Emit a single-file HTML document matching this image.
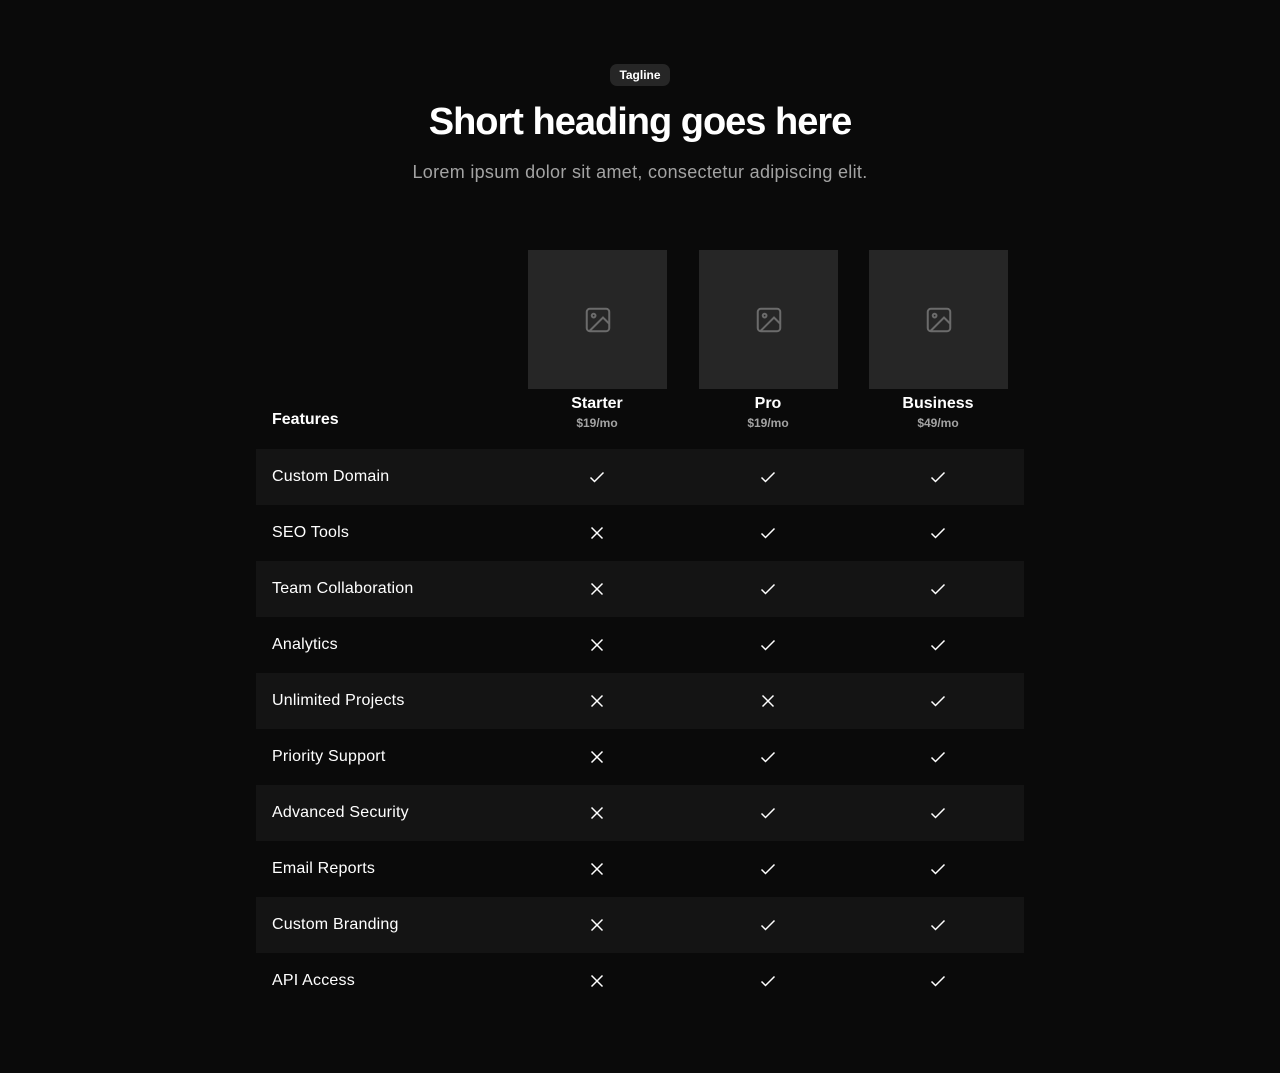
<!DOCTYPE html>
<html><head><style>
body{margin:0;background:#0a0a0a;font-family:"Liberation Sans",sans-serif;color:#fff;}
.wrap{width:1280px;height:1073px;position:relative;overflow:hidden;}
.tag{position:absolute;left:610px;top:64px;width:60px;height:22px;border-radius:7px;background:#262626;font-size:12px;font-weight:bold;text-align:center;line-height:22px;}
h1{position:absolute;top:99px;left:0;width:1280px;text-align:center;margin:0;font-size:38px;letter-spacing:-1px;font-weight:bold;line-height:46px;}
.sub{position:absolute;top:160px;width:1280px;text-align:center;font-size:18px;letter-spacing:.3px;color:#a3a3a3;line-height:24px;}
.img{position:absolute;top:250px;width:139px;height:139px;background:#262626;display:flex;align-items:center;justify-content:center;}
.ph{position:absolute;top:395px;width:170px;text-align:center;}
.pn{font-weight:bold;font-size:16px;line-height:18px;}
.pp{font-size:12px;color:#a3a3a3;font-weight:bold;line-height:16px;margin-top:2px;}
.feat{position:absolute;left:272px;top:411px;font-weight:bold;font-size:16px;line-height:18px;}
.row{position:absolute;left:256px;width:768px;height:56px;font-size:16px;}
.row.s{background:#141414;}
.row .t{position:absolute;left:16px;top:0;line-height:56px;letter-spacing:.2px;}
.row .c{position:absolute;top:19px;width:18px;height:18px;}
</style></head><body><div class="wrap">
<div class="tag">Tagline</div>
<h1>Short heading goes here</h1>
<div class="sub">Lorem ipsum dolor sit amet, consectetur adipiscing elit.</div>
<div class="feat">Features</div>
<div class="img" style="left:528px"><svg width="30" height="30" viewBox="0 0 24 24" fill="none" stroke="#6b6b6b" stroke-width="1.6"><rect x="3" y="3" width="18" height="18" rx="2.5"/><circle cx="8.5" cy="8.5" r="1.5"/><path d="M21 15l-5-5L5 21"/></svg></div>
<div class="img" style="left:699px"><svg width="30" height="30" viewBox="0 0 24 24" fill="none" stroke="#6b6b6b" stroke-width="1.6"><rect x="3" y="3" width="18" height="18" rx="2.5"/><circle cx="8.5" cy="8.5" r="1.5"/><path d="M21 15l-5-5L5 21"/></svg></div>
<div class="img" style="left:869px"><svg width="30" height="30" viewBox="0 0 24 24" fill="none" stroke="#6b6b6b" stroke-width="1.6"><rect x="3" y="3" width="18" height="18" rx="2.5"/><circle cx="8.5" cy="8.5" r="1.5"/><path d="M21 15l-5-5L5 21"/></svg></div>
<div class="ph" style="left:512px"><div class="pn">Starter</div><div class="pp">$19/mo</div></div>
<div class="ph" style="left:683px"><div class="pn">Pro</div><div class="pp">$19/mo</div></div>
<div class="ph" style="left:853px"><div class="pn">Business</div><div class="pp">$49/mo</div></div>
<div id="b"></div>
<script>
var Y='<svg width="18" height="18" viewBox="0 0 18 18" fill="none" stroke="#fff" stroke-width="1.5"><path d="M2.5 9.5l4 4 9-9"/></svg>';
var N='<svg width="18" height="18" viewBox="0 0 18 18" fill="none" stroke="#fff" stroke-width="1.5"><path d="M3.5 3.5l11 11M14.5 3.5l-11 11"/></svg>';
var rows=[["Custom Domain",1,1,1],["SEO Tools",0,1,1],["Team Collaboration",0,1,1],["Analytics",0,1,1],["Unlimited Projects",0,0,1],["Priority Support",0,1,1],["Advanced Security",0,1,1],["Email Reports",0,1,1],["Custom Branding",0,1,1],["API Access",0,1,1]];
var xs=[332,503,673];
var h='';rows.forEach(function(r,i){h+='<div class="row'+(i%2==0?' s':'')+'" style="top:'+(449+i*56)+'px"><div class="t">'+r[0]+'</div>';for(var k=1;k<4;k++)h+='<div class="c" style="left:'+xs[k-1]+'px">'+(r[k]?Y:N)+'</div>';h+='</div>';});
document.getElementById('b').innerHTML=h;
</script>
</div></body></html>
